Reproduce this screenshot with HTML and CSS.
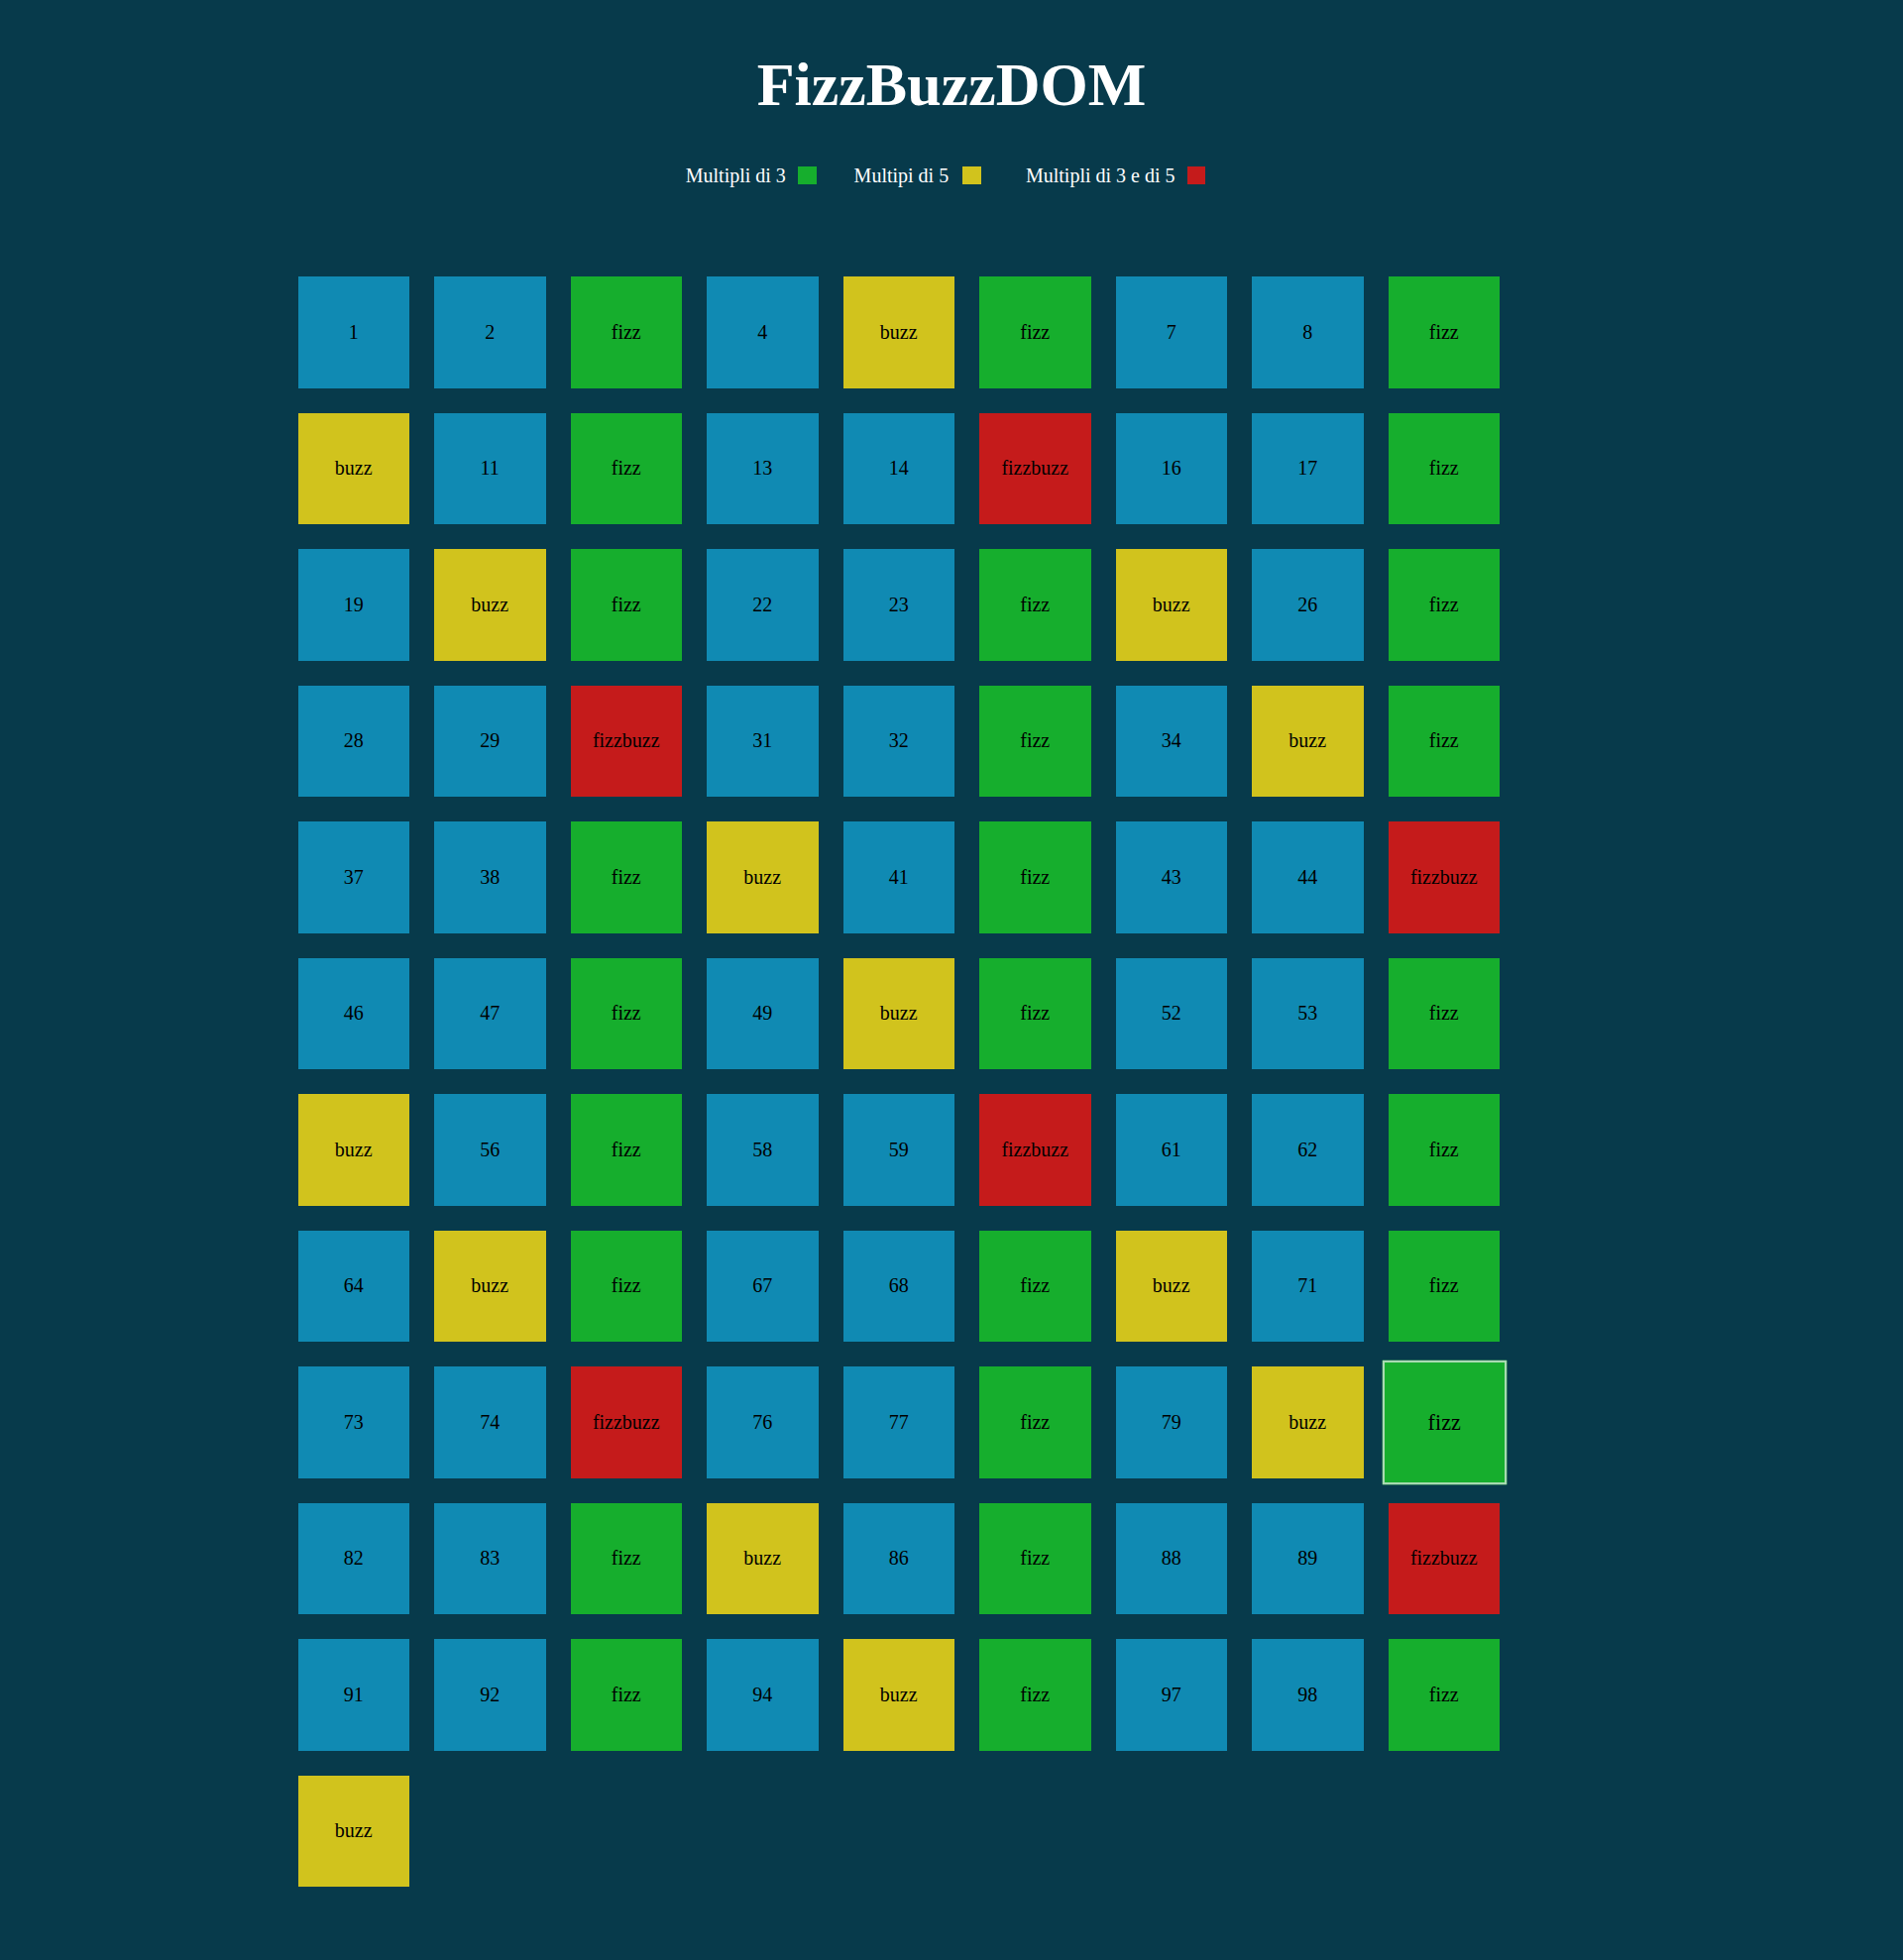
FILE: index.html
```html
<!DOCTYPE html>
<html lang="it">
<head>
<meta charset="utf-8">
<title>FizzBuzzDOM</title>
<link rel="stylesheet" href="styles.css">
</head>
<body>
<header class="header">
  <h1 class="title">FizzBuzzDOM</h1>
  <div class="legend">
    <div class="legend-item"><span class="legend-label">Multipli di 3</span><span class="swatch swatch--fizz"></span></div>
    <div class="legend-item legend-item--second"><span class="legend-label">Multipi di 5</span><span class="swatch swatch--buzz"></span></div>
    <div class="legend-item legend-item--third"><span class="legend-label">Multipli di 3 e di 5</span><span class="swatch swatch--fizzbuzz"></span></div>
  </div>
</header>
<main class="grid">
  <div class="tile">1</div>
  <div class="tile">2</div>
  <div class="tile tile--fizz">fizz</div>
  <div class="tile">4</div>
  <div class="tile tile--buzz">buzz</div>
  <div class="tile tile--fizz">fizz</div>
  <div class="tile">7</div>
  <div class="tile">8</div>
  <div class="tile tile--fizz">fizz</div>
  <div class="tile tile--buzz">buzz</div>
  <div class="tile">11</div>
  <div class="tile tile--fizz">fizz</div>
  <div class="tile">13</div>
  <div class="tile">14</div>
  <div class="tile tile--fizzbuzz">fizzbuzz</div>
  <div class="tile">16</div>
  <div class="tile">17</div>
  <div class="tile tile--fizz">fizz</div>
  <div class="tile">19</div>
  <div class="tile tile--buzz">buzz</div>
  <div class="tile tile--fizz">fizz</div>
  <div class="tile">22</div>
  <div class="tile">23</div>
  <div class="tile tile--fizz">fizz</div>
  <div class="tile tile--buzz">buzz</div>
  <div class="tile">26</div>
  <div class="tile tile--fizz">fizz</div>
  <div class="tile">28</div>
  <div class="tile">29</div>
  <div class="tile tile--fizzbuzz">fizzbuzz</div>
  <div class="tile">31</div>
  <div class="tile">32</div>
  <div class="tile tile--fizz">fizz</div>
  <div class="tile">34</div>
  <div class="tile tile--buzz">buzz</div>
  <div class="tile tile--fizz">fizz</div>
  <div class="tile">37</div>
  <div class="tile">38</div>
  <div class="tile tile--fizz">fizz</div>
  <div class="tile tile--buzz">buzz</div>
  <div class="tile">41</div>
  <div class="tile tile--fizz">fizz</div>
  <div class="tile">43</div>
  <div class="tile">44</div>
  <div class="tile tile--fizzbuzz">fizzbuzz</div>
  <div class="tile">46</div>
  <div class="tile">47</div>
  <div class="tile tile--fizz">fizz</div>
  <div class="tile">49</div>
  <div class="tile tile--buzz">buzz</div>
  <div class="tile tile--fizz">fizz</div>
  <div class="tile">52</div>
  <div class="tile">53</div>
  <div class="tile tile--fizz">fizz</div>
  <div class="tile tile--buzz">buzz</div>
  <div class="tile">56</div>
  <div class="tile tile--fizz">fizz</div>
  <div class="tile">58</div>
  <div class="tile">59</div>
  <div class="tile tile--fizzbuzz">fizzbuzz</div>
  <div class="tile">61</div>
  <div class="tile">62</div>
  <div class="tile tile--fizz">fizz</div>
  <div class="tile">64</div>
  <div class="tile tile--buzz">buzz</div>
  <div class="tile tile--fizz">fizz</div>
  <div class="tile">67</div>
  <div class="tile">68</div>
  <div class="tile tile--fizz">fizz</div>
  <div class="tile tile--buzz">buzz</div>
  <div class="tile">71</div>
  <div class="tile tile--fizz">fizz</div>
  <div class="tile">73</div>
  <div class="tile">74</div>
  <div class="tile tile--fizzbuzz">fizzbuzz</div>
  <div class="tile">76</div>
  <div class="tile">77</div>
  <div class="tile tile--fizz">fizz</div>
  <div class="tile">79</div>
  <div class="tile tile--buzz">buzz</div>
  <div class="tile tile--fizz tile--active">fizz</div>
  <div class="tile">82</div>
  <div class="tile">83</div>
  <div class="tile tile--fizz">fizz</div>
  <div class="tile tile--buzz">buzz</div>
  <div class="tile">86</div>
  <div class="tile tile--fizz">fizz</div>
  <div class="tile">88</div>
  <div class="tile">89</div>
  <div class="tile tile--fizzbuzz">fizzbuzz</div>
  <div class="tile">91</div>
  <div class="tile">92</div>
  <div class="tile tile--fizz">fizz</div>
  <div class="tile">94</div>
  <div class="tile tile--buzz">buzz</div>
  <div class="tile tile--fizz">fizz</div>
  <div class="tile">97</div>
  <div class="tile">98</div>
  <div class="tile tile--fizz">fizz</div>
  <div class="tile tile--buzz">buzz</div>
</main>
</body>
</html>
```

FILE: styles.css
```css
html, body {
  margin: 0;
  padding: 0;
}

body {
  background: #073a4b;
  font-family: "Liberation Serif", "Times New Roman", serif;
  color: #ffffff;
  padding-bottom: 61px;
}

.header {
  display: flex;
  flex-direction: column;
  align-items: center;
  padding-top: 49.5px;
}

.title {
  margin: 0;
  font-size: 62px;
  font-weight: bold;
  line-height: normal;
  color: #ffffff;
}

.legend {
  display: flex;
  align-items: center;
  justify-content: center;
  margin-top: 45px;
  padding-right: 12px;
  font-size: 20px;
  line-height: normal;
}

.legend-item {
  display: flex;
  align-items: center;
}

.legend-item--second {
  margin-left: 38px;
}

.legend-item--third {
  margin-left: 45px;
}

.swatch {
  display: inline-block;
  width: 18.75px;
  height: 18.75px;
  margin-left: 12px;
}

.legend-item--second .swatch {
  margin-left: 14px;
}

.swatch--fizz { background: #16ae2d; }
.swatch--buzz { background: #d1c31d; }
.swatch--fizzbuzz { background: #c51b1b; }

.grid {
  display: flex;
  flex-wrap: wrap;
  gap: 25px;
  width: 70%;
  box-sizing: border-box;
  margin: 78px auto 0;
  padding: 12.5px;
}

.tile {
  width: 112.5px;
  height: 112.5px;
  box-sizing: border-box;
  display: flex;
  align-items: center;
  justify-content: center;
  background: #108ab3;
  color: #000000;
  font-size: 20px;
}

.tile--fizz { background: #16ae2d; }
.tile--buzz { background: #d1c31d; }
.tile--fizzbuzz { background: #c51b1b; }

.tile--active {
  border: 2px solid #a9dab2;
  transform: scale(1.11);
}
```
